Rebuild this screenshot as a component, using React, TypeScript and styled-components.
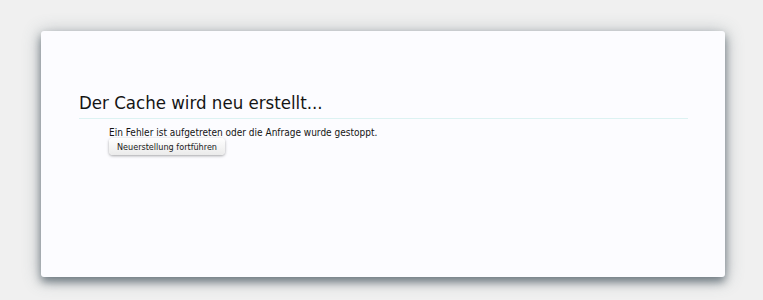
import styled, { createGlobalStyle } from 'styled-components';

const GlobalStyle = createGlobalStyle`
    html, body {
        margin: 0;
        padding: 0;
        background: #f0f0f0;
    }
    body {
        font-family: "DejaVu Sans Condensed", "DejaVu Sans", Verdana, sans-serif;
        color: #141414;
    }
`

const Page = styled.div`
    width: 763px;
    height: 300px;
    box-sizing: border-box;
    padding: 31px 38px 23px 41px;
`

const Card = styled.div`
    height: 246px;
    box-sizing: border-box;
    background: #fcfcff;
    border-radius: 3px;
    padding: 60px 37px 0 38px;
    box-shadow: 0 5px 8px rgba(60, 75, 85, 0.6), 0 2px 18px rgba(80, 95, 105, 0.45);
`

const Title = styled.h1`
    margin: 0;
    padding-bottom: 4px;
    font-size: 18.5px;
    font-weight: normal;
    line-height: 23px;
    border-bottom: 1px solid #dcf2f2;
`

const Body = styled.div`
    padding: 8px 0 0 30px;
    display: flex;
    flex-direction: column;
    align-items: flex-start;
`

const Message = styled.p`
    margin: 0;
    font-size: 10px;
    line-height: 11px;
`

const Button = styled.button`
    margin-top: 0;
    height: 17px;
    padding: 0 8px;
    font-family: "DejaVu Sans Condensed", "DejaVu Sans", Verdana, sans-serif;
    font-size: 9px;
    color: #1a1a1a;
    border: none;
    border-radius: 4px;
    background: linear-gradient(#ffffff, #ebebeb);
    box-shadow: 0 1px 3px rgba(0, 0, 0, 0.35);
`

export default function App() {
    return (
        <Page>
            <GlobalStyle />
            <Card>
                <Title>Der Cache wird neu erstellt...</Title>
                <Body>
                    <Message>Ein Fehler ist aufgetreten oder die Anfrage wurde gestoppt.</Message>
                    <Button>Neuerstellung fortführen</Button>
                </Body>
            </Card>
        </Page>
    );
}
